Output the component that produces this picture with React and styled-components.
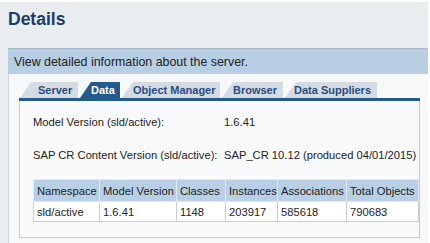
import React from 'react';
import styled, { createGlobalStyle } from 'styled-components';

const GlobalStyle = createGlobalStyle`
    html, body {
        margin: 0;
        padding: 0;
        background: #ffffff;
    }
    body {
        font-family: "Liberation Sans", Arial, sans-serif;
    }
`;

const Page = styled.div`
    width: 428px;
    height: 241px;
    margin-top: 2px;
    background: #eaedf0;
    display: flex;
    flex-direction: column;
    box-sizing: border-box;
    padding-left: 8px;
    overflow: hidden;
`;

const Title = styled.h1`
    margin: 0;
    height: 46px;
    padding-top: 7px;
    box-sizing: border-box;
    font-size: 17.5px;
    font-weight: bold;
    color: #1d3a68;
`;

const InfoBar = styled.div`
    height: 25px;
    display: flex;
    align-items: center;
    padding-left: 6px;
    background: #b8cee4;
    border-top: 1px solid #a9b9c9;
    font-size: 12.4px;
    color: #222;
`;

const Content = styled.div`
    flex: 1;
    background: #f7f8fa;
    border-left: 1px solid #d3d7db;
    padding: 8px 8px 0 10px;
`;

const TabStrip = styled.div`
    display: flex;
    gap: 2px;
    height: 16px;
    align-items: flex-end;
    border-bottom: 3px solid #245a8c;
    padding-left: 1px;
`;

const Tab = styled.div`
    width: ${(p) => p.$width}px;
    height: 16px;
    box-sizing: border-box;
    display: flex;
    align-items: center;
    padding-left: ${(p) => p.$pad}px;
    font-size: 11px;
    font-weight: bold;
    color: ${(p) => (p.$active ? '#ffffff' : '#2b4c80')};
    background: ${(p) => (p.$active ? '#245a8c' : '#d3dbe4')};
    clip-path: polygon(11px 0, 100% 0, 100% 100%, 0 100%);
`;

const Panel = styled.div`
    background: #f9fafb;
    border: 1px solid #c4c9ce;
    border-top: none;
    padding: 15px 0 15px 13px;
`;

const Row = styled.div`
    display: grid;
    grid-template-columns: 191px 1fr;
    font-size: 11.2px;
    color: #222;
    height: 14px;
    white-space: nowrap;
    margin-bottom: ${(p) => p.$gap}px;
`;

const Table = styled.table`
    border-collapse: collapse;
    table-layout: fixed;
    width: 385px;
    font-size: 11.2px;
    color: #222;
`;

const HeadCell = styled.th`
    background: #b9cfe5;
    font-weight: normal;
    text-align: left;
    height: 21px;
    padding: 0 3px;
    border: 1px solid #e2e9f0;
    white-space: nowrap;
    overflow: hidden;
`;

const Cell = styled.td`
    background: #ffffff;
    height: 19px;
    padding: 0 3px;
    border: 1px solid #c6ccd2;
    white-space: nowrap;
`;

const tabs = [
    { label: 'Server', pad: 18, width: 58 },
    { label: 'Data', pad: 11, width: 40 },
    { label: 'Object Manager', pad: 11, width: 98 },
    { label: 'Browser', pad: 11, width: 61 },
    { label: 'Data Suppliers', pad: 9, width: 92 },
];

const columns = [
    { head: 'Namespace', value: 'sld/active', width: 66 },
    { head: 'Model Version', value: '1.6.41', width: 77 },
    { head: 'Classes', value: '1148', width: 49 },
    { head: 'Instances', value: '203917', width: 52 },
    { head: 'Associations', value: '585618', width: 69 },
    { head: 'Total Objects', value: '790683', width: 72 },
];

const App = () => (
    <Page>
        <GlobalStyle />
        <Title>Details</Title>
        <InfoBar>View detailed information about the server.</InfoBar>
        <Content>
            <TabStrip>
                {tabs.map((t) => (
                    <Tab
                        key={t.label}
                        $active={t.label === 'Data'}
                        $pad={t.pad}
                        $width={t.width}
                    >
                        {t.label}
                    </Tab>
                ))}
            </TabStrip>
            <Panel>
                <Row $gap={19}>
                    <span>Model Version (sld/active):</span>
                    <span>1.6.41</span>
                </Row>
                <Row $gap={16}>
                    <span>SAP CR Content Version (sld/active):</span>
                    <span>SAP_CR 10.12 (produced 04/01/2015)</span>
                </Row>
                <Table>
                    <colgroup>
                        {columns.map((c) => (
                            <col key={c.head} style={{ width: c.width }} />
                        ))}
                    </colgroup>
                    <thead>
                        <tr>
                            {columns.map((c) => (
                                <HeadCell key={c.head}>{c.head}</HeadCell>
                            ))}
                        </tr>
                    </thead>
                    <tbody>
                        <tr>
                            {columns.map((c) => (
                                <Cell key={c.head}>{c.value}</Cell>
                            ))}
                        </tr>
                    </tbody>
                </Table>
            </Panel>
        </Content>
    </Page>
);

export default App;
